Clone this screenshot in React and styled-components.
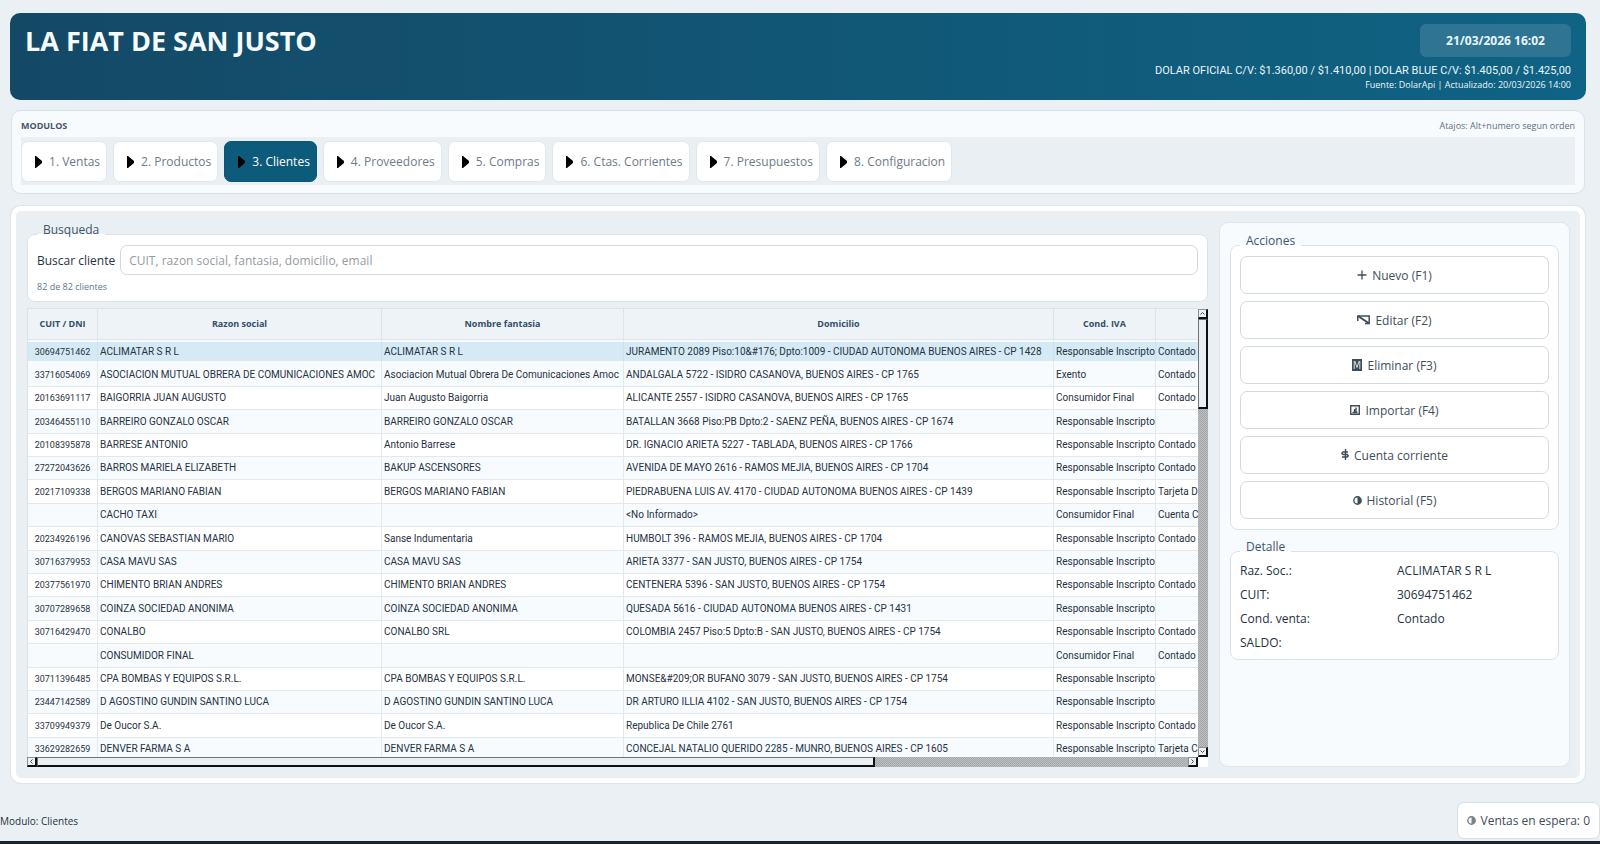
import React, { useState } from 'react';
import styled, { createGlobalStyle } from 'styled-components';

const modules = [
  'Ventas',
  'Productos',
  'Clientes',
  'Proveedores',
  'Compras',
  'Ctas. Corrientes',
  'Presupuestos',
  'Configuracion',
];

const RI = 'Responsable Inscripto';
const CF = 'Consumidor Final';

const clients = [
  ['30694751462', 'ACLIMATAR S R L', 'ACLIMATAR S R L', 'JURAMENTO 2089 Piso:10&#176; Dpto:1009 - CIUDAD AUTONOMA BUENOS AIRES - CP 1428', RI, 'Contado'],
  ['33716054069', 'ASOCIACION MUTUAL OBRERA DE COMUNICACIONES AMOC', 'Asociacion Mutual Obrera De Comunicaciones Amoc', 'ANDALGALA 5722 - ISIDRO CASANOVA, BUENOS AIRES - CP 1765', 'Exento', 'Contado'],
  ['20163691117', 'BAIGORRIA JUAN AUGUSTO', 'Juan Augusto Baigorria', 'ALICANTE 2557 - ISIDRO CASANOVA, BUENOS AIRES - CP 1765', CF, 'Contado'],
  ['20346455110', 'BARREIRO GONZALO OSCAR', 'BARREIRO GONZALO OSCAR', 'BATALLAN 3668 Piso:PB Dpto:2 - SAENZ PEÑA, BUENOS AIRES - CP 1674', RI, ''],
  ['20108395878', 'BARRESE ANTONIO', 'Antonio Barrese', 'DR. IGNACIO ARIETA 5227 - TABLADA, BUENOS AIRES - CP 1766', RI, 'Contado'],
  ['27272043626', 'BARROS MARIELA ELIZABETH', 'BAKUP ASCENSORES', 'AVENIDA DE MAYO 2616 - RAMOS MEJIA, BUENOS AIRES - CP 1704', RI, 'Contado'],
  ['20217109338', 'BERGOS MARIANO FABIAN', 'BERGOS MARIANO FABIAN', 'PIEDRABUENA LUIS AV. 4170 - CIUDAD AUTONOMA BUENOS AIRES - CP 1439', RI, 'Tarjeta Debito'],
  ['', 'CACHO TAXI', '', '<No Informado>', CF, 'Cuenta Corriente'],
  ['20234926196', 'CANOVAS SEBASTIAN MARIO', 'Sanse Indumentaria', 'HUMBOLT 396 - RAMOS MEJIA, BUENOS AIRES - CP 1704', RI, 'Contado'],
  ['30716379953', 'CASA MAVU SAS', 'CASA MAVU SAS', 'ARIETA 3377 - SAN JUSTO, BUENOS AIRES - CP 1754', RI, ''],
  ['20377561970', 'CHIMENTO BRIAN ANDRES', 'CHIMENTO BRIAN ANDRES', 'CENTENERA 5396 - SAN JUSTO, BUENOS AIRES - CP 1754', RI, 'Contado'],
  ['30707289658', 'COINZA SOCIEDAD ANONIMA', 'COINZA SOCIEDAD ANONIMA', 'QUESADA 5616 - CIUDAD AUTONOMA BUENOS AIRES - CP 1431', RI, ''],
  ['30716429470', 'CONALBO', 'CONALBO SRL', 'COLOMBIA 2457 Piso:5 Dpto:B - SAN JUSTO, BUENOS AIRES - CP 1754', RI, 'Contado'],
  ['', 'CONSUMIDOR FINAL', '', '', CF, 'Contado'],
  ['30711396485', 'CPA BOMBAS Y EQUIPOS S.R.L.', 'CPA BOMBAS Y EQUIPOS S.R.L.', 'MONSE&#209;OR BUFANO 3079 - SAN JUSTO, BUENOS AIRES - CP 1754', RI, ''],
  ['23447142589', 'D AGOSTINO GUNDIN SANTINO LUCA', 'D AGOSTINO GUNDIN SANTINO LUCA', 'DR ARTURO ILLIA 4102 - SAN JUSTO, BUENOS AIRES - CP 1754', RI, ''],
  ['33709949379', 'De Oucor S.A.', 'De Oucor S.A.', 'Republica De Chile 2761', RI, 'Contado'],
  ['33629282659', 'DENVER FARMA S A', 'DENVER FARMA S A', 'CONCEJAL NATALIO QUERIDO 2285 - MUNRO, BUENOS AIRES - CP 1605', RI, 'Tarjeta Credito'],
];

const PlusIcon = () => (
  <svg width="10" height="10" viewBox="0 0 10 10" fill="none" stroke="currentColor">
    <path d="M5 0.5v9M0.5 5h9" strokeWidth="1.3" />
  </svg>
);

const EditIcon = () => (
  <svg width="13" height="10" viewBox="0 0 13 10" fill="none" stroke="currentColor" strokeWidth="1.5">
    <path d="M0.8 6V1h11.4v7.5H8" />
    <path d="M1 1l10.5 7" strokeWidth="2" />
  </svg>
);

const DeleteIcon = () => (
  <svg width="10" height="12" viewBox="0 0 10 12">
    <path d="M0 0h10v12H0z" fill="currentColor" />
    <path d="M2.2 2v8M2.8 2L5 8.500l2.200-6.500M7.800 2v8" fill="none" stroke="#fff" strokeWidth="0.8" />
  </svg>
);

const ImportIcon = () => (
  <svg width="10" height="10" viewBox="0 0 10 10" fill="none" stroke="currentColor">
    <path d="M0.7 0.7h8.6v8.6H0.7z" strokeWidth="1.4" />
    <path d="M2.5 7.500h5M4.500 7.500V4M6 2.500v5" strokeWidth="1.400" />
  </svg>
);

const AccountIcon = () => (
  <svg width="8" height="12" viewBox="0 0 8 12" fill="none" stroke="currentColor" strokeWidth="1.4">
    <path d="M4.5 0v11M7 3H2L0.8 4.300 2 5.500h4.200L7.300 6.800 6.200 8H1" />
  </svg>
);

const HalfIcon = () => (
  <svg width="9" height="9" viewBox="0 0 9 9">
    <circle cx="4.5" cy="4.5" r="3.7" fill="none" stroke="currentColor" strokeWidth="1.4" />
    <path d="M4.5 1a3.5 3.5 0 0 1 0 7z" fill="currentColor" />
  </svg>
);

const TriangleIcon = () => (
  <svg width="7" height="12" viewBox="0 0 7 12">
    <path d="M0 0h1l6 5v2l-6 5H0z" fill="#000" />
  </svg>
);

const arrows = {
  up: 'M1.5 4.5l2-2 2 2',
  down: 'M1.5 2.5l2 2 2-2',
  left: 'M4.5 1.5l-2 2 2 2',
  right: 'M2.5 1.5l2 2-2 2',
};

const Arrow = ({ dir }) => (
  <svg width="7" height="7" viewBox="0 0 7 7">
    <path d={arrows[dir]} fill="none" stroke="#44484c" />
  </svg>
);

const actions = [
  { label: 'Nuevo (F1)', Icon: PlusIcon },
  { label: 'Editar (F2)', Icon: EditIcon },
  { label: 'Eliminar (F3)', Icon: DeleteIcon },
  { label: 'Importar (F4)', Icon: ImportIcon },
  { label: 'Cuenta corriente', Icon: AccountIcon },
  { label: 'Historial (F5)', Icon: HalfIcon },
];

const App = () => {
  const [active, setActive] = useState(2);
  const [selected, setSelected] = useState(0);
  const [query, setQuery] = useState('');

  const client = clients[selected];

  return (
    <>
      <GlobalStyle />
      <Page>
        <Header>
          <Title>LA FIAT DE SAN JUSTO</Title>
          <HeaderInfo>
            <Clock>21/03/2026 16:02</Clock>
            <Rates>
              DOLAR OFICIAL C/V: $1.360,00 / $1.410,00 | DOLAR BLUE C/V: $1.405,00 / $1.425,00
            </Rates>
            <Source>Fuente: DolarApi | Actualizado: 20/03/2026 14:00</Source>
          </HeaderInfo>
        </Header>

        <ModulesPanel>
          <ModulesHead>
            <ModulesTitle>MODULOS</ModulesTitle>
            <span>Atajos: Alt+numero segun orden</span>
          </ModulesHead>
          <ModulesBar>
            {modules.map((name, i) => (
              <ModuleBtn key={name} $active={i === active} onClick={() => setActive(i)}>
                <TriangleIcon />
                {i + 1}. {name}
              </ModuleBtn>
            ))}
          </ModulesBar>
        </ModulesPanel>

        <Content>
          <ListColumn>
            <Group>
              <Legend>Busqueda</Legend>
              <SearchRow>
                <label htmlFor="search">Buscar cliente</label>
                <SearchInput
                  id="search"
                  placeholder="CUIT, razon social, fantasia, domicilio, email"
                  value={query}
                  onChange={e => setQuery(e.target.value)}
                />
              </SearchRow>
              <Count>82 de 82 clientes</Count>
            </Group>

            <TableFrame>
              <TableView>
                <Table>
                  <colgroup>
                    <Col $width={70} />
                    <Col $width={284} />
                    <Col $width={242} />
                    <Col $width={430} />
                    <Col $width={102} />
                    <Col $width={482} />
                  </colgroup>
                  <thead>
                    <tr>
                      <Th>CUIT / DNI</Th>
                      <Th>Razon social</Th>
                      <Th>Nombre fantasia</Th>
                      <Th>Domicilio</Th>
                      <Th>Cond. IVA</Th>
                      <Th />
                    </tr>
                  </thead>
                  <tbody>
                    {clients.map((row, i) => (
                      <Row key={row[1]} $selected={i === selected} onClick={() => setSelected(i)}>
                        {row.map((cell, j) => (
                          <Td key={j}>{cell}</Td>
                        ))}
                      </Row>
                    ))}
                  </tbody>
                </Table>
              </TableView>
              <VerticalBar>
                <BarButton>
                  <Arrow dir="up" />
                </BarButton>
                <VerticalThumb />
                <BarTrack />
                <BarButton>
                  <Arrow dir="down" />
                </BarButton>
              </VerticalBar>
              <HorizontalBar>
                <BarButton>
                  <Arrow dir="left" />
                </BarButton>
                <HorizontalThumb />
                <BarTrack />
                <BarButton>
                  <Arrow dir="right" />
                </BarButton>
              </HorizontalBar>
              <Corner />
            </TableFrame>
          </ListColumn>

          <SidePanel>
            <Group>
              <Legend>Acciones</Legend>
              <ActionList>
                {actions.map(({ label, Icon }) => (
                  <ActionBtn key={label}>
                    <Icon />
                    {label}
                  </ActionBtn>
                ))}
              </ActionList>
            </Group>
            <Group>
              <Legend>Detalle</Legend>
              <Detail>
                <dt>Raz. Soc.:</dt>
                <dd>{client[1]}</dd>
                <dt>CUIT:</dt>
                <dd>{client[0]}</dd>
                <dt>Cond. venta:</dt>
                <dd>{client[5]}</dd>
                <dt>SALDO:</dt>
                <dd />
              </Detail>
            </Group>
          </SidePanel>
        </Content>

        <StatusBar>
          <span>Modulo: {modules[active]}</span>
          <WaitingBtn>
            <HalfIcon />
            Ventas en espera: 0
          </WaitingBtn>
        </StatusBar>
      </Page>
    </>
  );
};

const GlobalStyle = createGlobalStyle`
  * {
    box-sizing: border-box;
  }

  body {
    margin: 0;
    background-color: #eaf0f4;
    color: #26323f;
    font-family: 'Open Sans', 'Noto Sans', sans-serif;
    font-size: 12px;
  }

  button,
  input {
    font: inherit;
  }
`;

const Page = styled.div`
  display: flex;
  flex-direction: column;
  height: 100vh;
  min-height: 640px;
  padding-top: 13px;
  border-bottom: 3px solid #1b232d;
`;

const Header = styled.header`
  display: flex;
  justify-content: space-between;
  margin: 0 14px 10px 10px;
  padding: 11px 15px 9px;
  border-radius: 10px;
  background: linear-gradient(90deg, #144966, #0f6384);
  color: #e9f6fc;
`;

const Title = styled.h1`
  margin: 0;
  color: #f5fbff;
  font-size: 27px;
  line-height: 34px;
  font-weight: 700;
`;

const HeaderInfo = styled.div`
  display: flex;
  flex-direction: column;
  align-items: flex-end;
`;

const Clock = styled.div`
  width: 151px;
  margin-bottom: 6px;
  border-radius: 6px;
  background-color: #2f7593;
  font-size: 12px;
  line-height: 33px;
  font-weight: 700;
  text-align: center;
`;

const Rates = styled.div`
  font-family: Roboto, sans-serif;
  font-size: 11px;
  line-height: 16px;
`;

const Source = styled.div`
  font-size: 9px;
  line-height: 12px;
`;

const ModulesPanel = styled.nav`
  margin: 0 15px 12px 11px;
  padding: 9px 9px 8px;
  border: 1px solid #d7e1e9;
  border-radius: 10px;
  background-color: #f7fbfe;
`;

const ModulesHead = styled.div`
  display: flex;
  justify-content: space-between;
  margin-bottom: 5px;
  color: #5f6f80;
  font-size: 9px;
  line-height: 12px;
`;

const ModulesTitle = styled.span`
  color: #44566a;
  font-weight: 700;
`;

const ModulesBar = styled.div`
  display: flex;
  gap: 6px;
  padding: 4px 0 3px;
  background-color: #eaeff3;
`;

const ModuleBtn = styled.button`
  display: flex;
  align-items: center;
  gap: 7px;
  height: 41px;
  padding: 0 6px 0 13px;
  border: 1px solid ${({ $active }) => ($active ? '#0b5675' : '#e0e7ed')};
  border-radius: 7px;
  background-color: ${({ $active }) => ($active ? '#0d5b7b' : '#fff')};
  color: ${({ $active }) => ($active ? '#fff' : '#6e7b87')};
`;

const Content = styled.main`
  display: flex;
  flex: 1;
  gap: 11px;
  min-height: 0;
  margin: 0 15px 19px 11px;
  padding: 11px 10px 11px 11px;
  border: 5px solid #fff;
  border-radius: 10px;
  background-color: #eaeff4;
  box-shadow: 0 0 0 1px #dde5ec;
`;

const ListColumn = styled.section`
  display: flex;
  flex: 1;
  flex-direction: column;
  gap: 6px;
  min-width: 0;
  padding-top: 1px;
`;

const Group = styled.fieldset`
  min-width: 0;
  margin: 0;
  padding: 0 9px 8px;
  border: 1px solid #d9e2e9;
  border-radius: 8px;
  background-color: #fff;
`;

const Legend = styled.legend`
  padding: 0 6px 8px;
  color: #40566b;
  line-height: 14px;
`;

const SearchRow = styled.div`
  display: flex;
  align-items: center;
  gap: 5px;
  margin-bottom: 6px;
`;

const SearchInput = styled.input`
  flex: 1;
  height: 30px;
  padding: 0 8px;
  border: 1px solid #d3dade;
  border-radius: 7px;
  background-color: #fff;

  &::placeholder {
    color: #969b9f;
  }
`;

const Count = styled.div`
  color: #64748a;
  font-size: 9px;
  line-height: 12px;
`;

const TableFrame = styled.div`
  display: grid;
  flex: 1;
  grid-template-columns: 1fr 10px;
  grid-template-rows: 1fr 10px;
  min-height: 0;
`;

const TableView = styled.div`
  min-width: 0;
  min-height: 0;
  overflow: hidden;
  border-top: 1px solid #d9e2e9;
  border-left: 1px solid #d9e2e9;
  background-color: #fff;
`;

const Table = styled.table`
  width: 1610px;
  table-layout: fixed;
  border-collapse: separate;
  border-spacing: 0;
  font-size: 9px;
  line-height: 14px;
`;

const Col = styled.col`
  width: ${({ $width }) => $width}px;
`;

const Th = styled.th`
  height: 31px;
  padding: 0;
  border-right: 1px solid #dbe4eb;
  border-bottom: 1px solid #dbe4eb;
  background-color: #eef3f8;
  color: #334e68;
  font-weight: 700;
`;

const Td = styled.td`
  padding: 0 0 0 2px;
  border-right: 1px solid #e1e9ef;
  border-bottom: 1px solid #e1e9ef;
  overflow: hidden;
  font-family: Roboto, sans-serif;
  font-size: 10px;
  white-space: nowrap;

  &:first-child {
    padding-left: 0;
    font-size: 9px;
    text-align: center;
  }
`;

const Row = styled.tr`
  height: 23px;
  background-color: #fff;

  &:nth-child(even) {
    background-color: #f7fbfe;
  }

  &:nth-child(5n + 2),
  &:nth-child(5n + 4) {
    height: 24px;
  }

  ${Td} {
    ${({ $selected }) =>
      $selected &&
      `
        background-color: #d5eaf4;
        border-top: 2px solid #f7fbfe;
        border-bottom: 2px solid #f7fbfe;
        border-right-color: #cbe2ee;
        line-height: 12px;
      `}
  }
`;

const VerticalBar = styled.div`
  display: flex;
  flex-direction: column;
  min-height: 0;
  padding-top: 1px;
`;

const HorizontalBar = styled.div`
  display: flex;
  min-width: 0;
`;

const BarButton = styled.span`
  display: flex;
  flex: none;
  width: 10px;
  height: 10px;
  border: 1px solid #8b8f92;
  border-right: 2px solid #0e1114;
  border-bottom: 2px solid #0e1114;
  background-color: #edf1f4;
`;

const Thumb = styled.div`
  border: 1px solid #6e7376;
  border-right: 2px solid #0e1114;
  border-bottom: 2px solid #0e1114;
  background-color: #eaeff3;
`;

const VerticalThumb = styled(Thumb)`
  height: 20%;
`;

const BarTrack = styled.div`
  flex: 3;
  background: repeating-conic-gradient(#a3a6a8 0 25%, #bdbfc0 0 50%) 0 0 / 2px 2px;
`;

const HorizontalThumb = styled(Thumb)`
  flex: 8;
`;

const Corner = styled.div`
  background-color: #fff;
`;

const SidePanel = styled.aside`
  display: flex;
  flex: none;
  flex-direction: column;
  gap: 10px;
  width: 351px;
  padding: 11px 10px;
  border: 1px solid #dde6ed;
  border-radius: 9px;
  background-color: #f7fbfe;
`;

const ActionList = styled.div`
  display: grid;
  gap: 7px;
  padding-bottom: 2px;
`;

const ActionBtn = styled.button`
  display: flex;
  align-items: center;
  justify-content: center;
  gap: 5px;
  height: 38px;
  border: 1px solid #d3dade;
  border-radius: 7px;
  background-color: #fff;
  color: #3f4d5b;
`;

const Detail = styled.dl`
  display: grid;
  grid-template-columns: 157px 1fr;
  row-gap: 7px;
  margin: 0;
  line-height: 17px;

  dd {
    margin: 0;
  }
`;

const StatusBar = styled.footer`
  display: flex;
  align-items: center;
  justify-content: space-between;
  margin-bottom: 2px;
  font-size: 10px;
`;

const WaitingBtn = styled.button`
  display: flex;
  align-items: center;
  gap: 5px;
  height: 37px;
  padding: 0 9px;
  border: 1px solid #d7dfe6;
  border-radius: 7px;
  background-color: #fff;
  color: #3f4d5b;
  font-size: 12px;

  svg {
    color: #7d8082;
  }
`;

export default App;
